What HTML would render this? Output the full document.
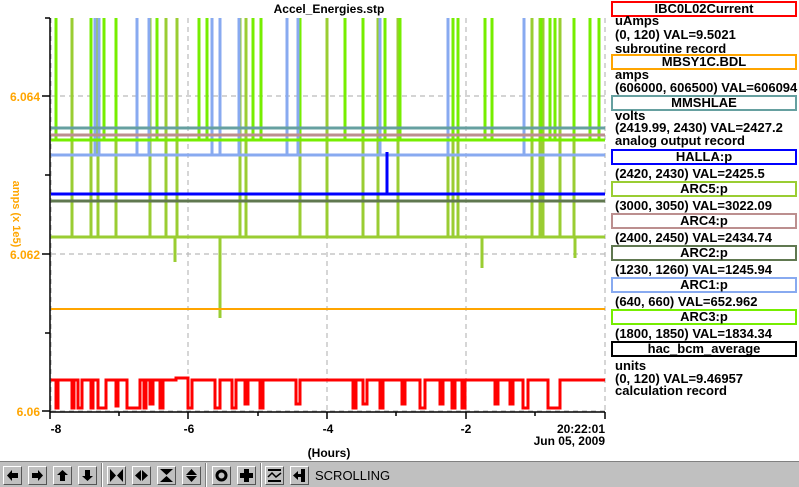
<!DOCTYPE html>
<html><head><style>
body{margin:0;width:799px;height:486px;background:#fff;overflow:hidden;position:relative;font-family:"Liberation Sans",sans-serif;font-weight:bold;}
.lg{position:absolute;left:611px;width:182px;height:12px;border:2px solid;font-size:13px;line-height:12px;text-align:center;color:#000;}
.t{position:absolute;left:615px;font-size:13px;line-height:13px;color:#000;white-space:nowrap;}
.tb{position:absolute;left:0;top:461px;width:799px;height:25px;background:#c0c0c0;border-top:1px solid #808080;}
.b{position:absolute;top:4px;width:17px;height:17px;background:#c0c0c0;border:1px solid;border-color:#fff #555 #555 #fff;}
.b svg{position:absolute;left:0;top:0}
.sep{position:absolute;top:1px;width:1px;height:24px;background:#808080;border-right:1px solid #fff}
</style></head><body>
<svg width="799" height="461" style="position:absolute;left:0;top:0" font-family="Liberation Sans" font-weight="bold">
<text x="329" y="13" font-size="12" text-anchor="middle">Accel_Energies.stp</text>
<g stroke="#bbb" stroke-dasharray="5,4" stroke-width="1.2">
<line x1="51" y1="96" x2="605" y2="96"/><line x1="51" y1="254" x2="605" y2="254"/><line x1="51" y1="411" x2="605" y2="411"/>
<line x1="188" y1="18" x2="188" y2="411"/><line x1="327" y1="18" x2="327" y2="411"/><line x1="466" y1="18" x2="466" y2="411"/><line x1="605" y1="18" x2="605" y2="411"/><line x1="51" y1="18" x2="51" y2="411"/>
</g>
<g stroke-width="3">
<g stroke="#9acd32">
<path d="M72 18V237M91 18V237M98 18V237M116 18V237M150 18V237M166 18V237M177 18V237M240 18V237M246 18V237M300 18V237M327 18V237M363 18V237M378 18V237M398 18V237M448 18V237M453 18V237M458 18V237M532 18V237M540 18V237M543 18V237M560 18V237M574 18V237"/>
<path d="M175 237V262M220 237V318M482 237V268M575 237V258"/>
</g>
<g stroke="#76ee00">
<path d="M56 18V140M91 18V140M104 18V140M116 18V140M157 18V140M199 18V140M207 18V140M253 18V140M261 18V140M300 18V140M345 18V140M363 18V140M385 18V140M400 18V140M453 18V140M458 18V140M485 18V140M492 18V140M541 18V140M550 18V140M555 18V140M574 18V140M590 18V140M599 18V140"/>
</g>
<g stroke="#88aaf0">
<path d="M95 18V155M99 18V155M137 18V155M149 18V155M212 18V155M239 18V155M287 18V155M298 18V155M448 18V155M524 18V155M220 18V155M380 18V155"/>
</g>
<line x1="51" y1="128" x2="605" y2="128" stroke="#66a0a0"/>
<line x1="51" y1="135" x2="605" y2="135" stroke="#bc8f8f"/>
<line x1="51" y1="140" x2="605" y2="140" stroke="#76ee00"/>
<line x1="51" y1="155" x2="605" y2="155" stroke="#88aaf0"/>
<line x1="51" y1="194" x2="605" y2="194" stroke="#0000ff"/>
<path d="M387 194V152" stroke="#0000ff" stroke-width="3"/>
<line x1="51" y1="201" x2="605" y2="201" stroke="#607850"/>
<line x1="51" y1="237" x2="605" y2="237" stroke="#9acd32"/>
<line x1="51" y1="309" x2="605" y2="309" stroke="#ffa500" stroke-width="2"/>
<path stroke="#ff0000" fill="none" d="M51 380H56V408H58V380H72V408H74V380H78V408H82V380H91V408H93V380H98V408H106V380H116V406H118V380H127V408H140V380H144V408H146V380H150V404H153V380H160V408H163V380H176V378H188V408H192V380H215V408H220V380H232V408H236V380H245V404H248V380H260V408H263V380H280V380H296V404H300V380H353V408H356V380H363V404H367V380H380V408H383V380H402V404H405V380H420V408H425V380H440V404H443V380H452V408H455V380H462V408H465V380H480V380H495V404H498V380H510V404H513V380H523V408H528V380H548V408H560V380H605"/>
</g>
<line x1="50" y1="18" x2="50" y2="412" stroke="#000" stroke-width="1.5"/>
<line x1="50" y1="412" x2="605" y2="412" stroke="#000" stroke-width="1.5"/>
<g stroke="#000" stroke-width="1.5"><path d="M45 18H50M42 96H50M45 175H50M42 254H50M45 333H50M42 411H50M50 412V419M119 412V416M188 412V419M258 412V416M327 412V419M396 412V416M466 412V419M535 412V416M605 412V419"/></g>
<g fill="#ffa500" font-size="12" text-anchor="end"><text x="40" y="101">6.064</text><text x="40" y="259">6.062</text><text x="40" y="416">6.06</text></g>
<text x="13" y="214" fill="#ffa500" font-size="11" transform="rotate(90 13 214)" text-anchor="middle">amps (x 1e5)</text>
<g font-size="12" text-anchor="middle"><text x="56" y="433">-8</text><text x="189" y="433">-6</text><text x="328" y="433">-4</text><text x="466" y="433">-2</text><text x="329" y="457">(Hours)</text></g>
<g font-size="12" text-anchor="end"><text x="605" y="433">20:22:01</text><text x="605" y="445">Jun 05, 2009</text></g>
</svg>
<div class="lg" style="top:1px;border-color:#f00">IBC0L02Current</div>
<div class="t" style="top:14px">uAmps</div><div class="t" style="top:28px">(0, 120) VAL=9.5021</div><div class="t" style="top:42px">subroutine record</div>
<div class="lg" style="top:54px;border-color:#ffa500">MBSY1C.BDL</div>
<div class="t" style="top:68px">amps</div><div class="t" style="top:81px">(606000, 606500) VAL=606094</div>
<div class="lg" style="top:95px;border-color:#66a0a0">MMSHLAE</div>
<div class="t" style="top:109px">volts</div><div class="t" style="top:121px">(2419.99, 2430) VAL=2427.2</div><div class="t" style="top:134px">analog output record</div>
<div class="lg" style="top:149px;border-color:#00f">HALLA:p</div>
<div class="t" style="top:167px">(2420, 2430) VAL=2425.5</div>
<div class="lg" style="top:181px;border-color:#9acd32">ARC5:p</div>
<div class="t" style="top:199px">(3000, 3050) VAL=3022.09</div>
<div class="lg" style="top:213px;border-color:#bc8f8f">ARC4:p</div>
<div class="t" style="top:231px">(2400, 2450) VAL=2434.74</div>
<div class="lg" style="top:245px;border-color:#607850">ARC2:p</div>
<div class="t" style="top:263px">(1230, 1260) VAL=1245.94</div>
<div class="lg" style="top:277px;border-color:#88aaf0">ARC1:p</div>
<div class="t" style="top:295px">(640, 660) VAL=652.962</div>
<div class="lg" style="top:309px;border-color:#76ee00">ARC3:p</div>
<div class="t" style="top:327px">(1800, 1850) VAL=1834.34</div>
<div class="lg" style="top:341px;border-color:#000">hac_bcm_average</div>
<div class="t" style="top:359px">units</div><div class="t" style="top:372px">(0, 120) VAL=9.46957</div><div class="t" style="top:384px">calculation record</div>
<div class="tb">
<div class="b" style="left:3px"><svg width="17" height="17"><path d="M3 8.5L8 3V6H14V11H8V14Z"/></svg></div>
<div class="b" style="left:28px"><svg width="17" height="17"><path d="M14 8.5L9 3V6H3V11H9V14Z"/></svg></div>
<div class="b" style="left:53px"><svg width="17" height="17"><path d="M8.5 3L14 8H11V14H6V8H3Z"/></svg></div>
<div class="b" style="left:78px"><svg width="17" height="17"><path d="M8.5 14L14 9H11V3H6V9H3Z"/></svg></div>
<div class="sep" style="left:101px"></div>
<div class="b" style="left:107px"><svg width="17" height="17"><path d="M2 2L8 8.5L2 15ZM15 2L9 8.5L15 15Z"/></svg></div>
<div class="b" style="left:132px"><svg width="17" height="17"><path d="M8 3L2 8.5L8 14ZM9 3L15 8.5L9 14Z"/></svg></div>
<div class="b" style="left:157px"><svg width="17" height="17"><path d="M2 2L15 2L8.5 8ZM2 15L15 15L8.5 9Z"/></svg></div>
<div class="b" style="left:182px"><svg width="17" height="17"><path d="M3 8L14 8L8.5 2ZM3 9L14 9L8.5 15Z"/></svg></div>
<div class="sep" style="left:205px"></div>
<div class="b" style="left:212px"><svg width="17" height="17"><circle cx="8.5" cy="8.5" r="4.5" fill="none" stroke="#000" stroke-width="3"/></svg></div>
<div class="b" style="left:237px"><svg width="17" height="17"><path d="M6 2H11V6H15V11H11V15H6V11H2V6H6Z"/></svg></div>
<div class="sep" style="left:260px"></div>
<div class="b" style="left:265px"><svg width="17" height="17"><path d="M2 3H15M2 14H15" stroke="#000" stroke-width="2"/><path d="M2 10L6 6L10 10L15 6" stroke="#000" fill="none" stroke-width="1.5"/></svg></div>
<div class="b" style="left:290px"><svg width="17" height="17"><path d="M2 8.5L7 4V7H10V2H14V15H10V10H7V13Z"/></svg></div>
<div style="position:absolute;left:315px;top:6px;font-size:13px;font-weight:normal;color:#000">SCROLLING</div>
</div>
</body></html>
